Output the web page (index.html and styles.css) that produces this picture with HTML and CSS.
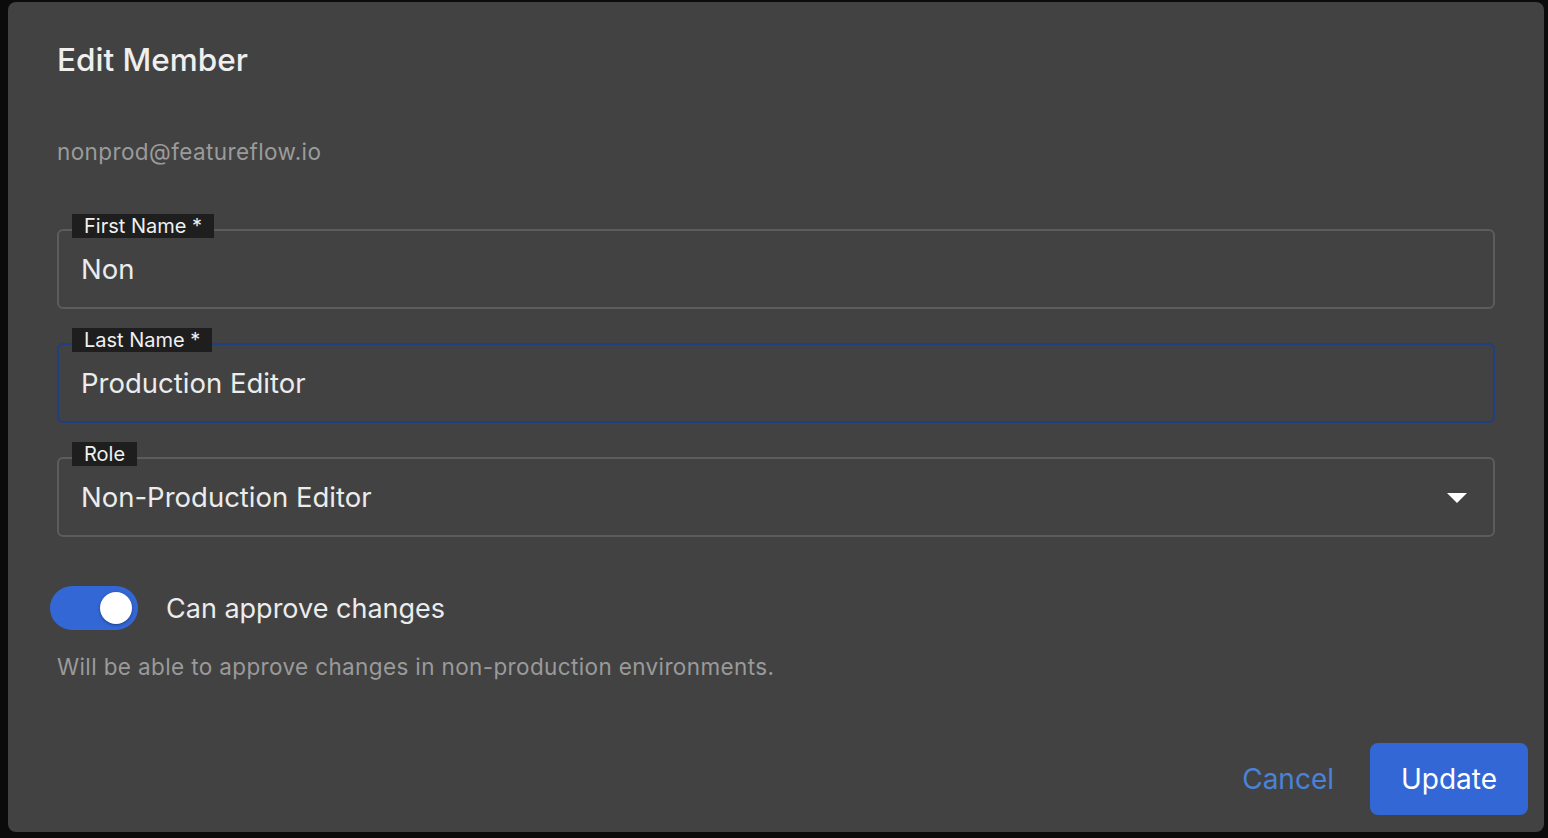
FILE: index.html
```html
<!DOCTYPE html>
<html lang="en">
<head>
    <meta charset="UTF-8">
    <meta name="viewport" content="width=device-width, initial-scale=1.0">
    <title>Edit Member</title>
    <link rel="stylesheet" href="styles.css">
</head>
<body>

<div class="dialog">
    <h2 class="title">Edit Member</h2>
    <div class="email">nonprod@featureflow.io</div>

    <div class="fields">
        <div class="field">
            <span class="label">First Name *</span>
            <div class="value">Non</div>
        </div>
        <div class="field focused">
            <span class="label">Last Name *</span>
            <div class="value">Production Editor</div>
        </div>
        <div class="field select">
            <span class="label">Role</span>
            <div class="value">Non-Production Editor</div>
            <span class="caret"></span>
        </div>
    </div>

    <div class="toggle_row">
        <span class="switch"><span class="knob"></span></span>
        <span class="toggle_text">Can approve changes</span>
    </div>
    <div class="helper">Will be able to approve changes in non-production environments.</div>

    <div class="actions">
        <button type="button" class="cancel">Cancel</button>
        <button type="button" class="update">Update</button>
    </div>
</div>

</body>
</html>
```

FILE: styles.css
```css
* {
    box-sizing: border-box;
}
body {
    margin: 0;
    height: 838px;
    overflow: hidden;
    background-color: #0b0b0b;
    font-family: Inter, "Noto Sans", sans-serif;
    color: #ececec;
}
.dialog {
    margin: 2px 0 0 8px;
    width: 1536px;
    height: 830px;
    background-color: #424242;
    border-radius: 8px;
    padding: 38px 49px 0 49px;
    display: flex;
    flex-direction: column;
}
.title {
    margin: 0;
    font-size: 31.5px;
    line-height: 40px;
    font-weight: 500;
    color: #efefef;
}
.email {
    margin-top: 57px;
    font-size: 22.5px;
    letter-spacing: 0.4px;
    line-height: 30px;
    color: #9b9b9b;
}
.fields {
    margin-top: 62px;
    display: flex;
    flex-direction: column;
    gap: 34px;
}
.field {
    position: relative;
    height: 80px;
    border: 2px solid #5c5c5c;
    border-radius: 6px;
    display: flex;
    align-items: center;
    padding: 0 22px;
}
.field.focused {
    border-color: #1f3f82;
}
.label {
    position: absolute;
    left: 13px;
    top: -17px;
    height: 24px;
    padding: 0 12px;
    background-color: #1e1e1e;
    font-size: 20px;
    line-height: 24px;
    color: #f0f0f0;
}
.value {
    font-size: 27.5px;
    color: #ececec;
}
.caret {
    position: absolute;
    right: 26px;
    top: 34px;
    width: 0;
    height: 0;
    border-left: 10px solid transparent;
    border-right: 10px solid transparent;
    border-top: 10px solid #ffffff;
}
.toggle_row {
    margin: 49px 0 0 -7px;
    height: 44px;
    display: flex;
    align-items: center;
    gap: 28px;
}
.switch {
    width: 88px;
    height: 44px;
    border-radius: 22px;
    background-color: #3367d6;
    display: flex;
    align-items: center;
    justify-content: flex-end;
    padding-right: 6px;
}
.knob {
    width: 32px;
    height: 32px;
    border-radius: 50%;
    background-color: #ffffff;
    box-shadow: 0 1px 3px rgba(0, 0, 0, 0.4);
}
.toggle_text {
    font-size: 27px;
    color: #ececec;
}
.helper {
    margin-top: 22px;
    font-size: 22.5px;
    letter-spacing: 0.37px;
    line-height: 30px;
    color: #9a9a9a;
}
.actions {
    margin: auto -33px 17px 0;
    display: flex;
    justify-content: flex-end;
    align-items: center;
    gap: 18px;
}
.cancel, .update {
    font-family: inherit;
    font-size: 28px;
    border: none;
    cursor: pointer;
}
.cancel {
    background: none;
    color: #4b82d8;
    padding: 0 18px;
}
.update {
    width: 158px;
    height: 72px;
    border-radius: 8px;
    background-color: #3367d6;
    color: #ffffff;
}
```
